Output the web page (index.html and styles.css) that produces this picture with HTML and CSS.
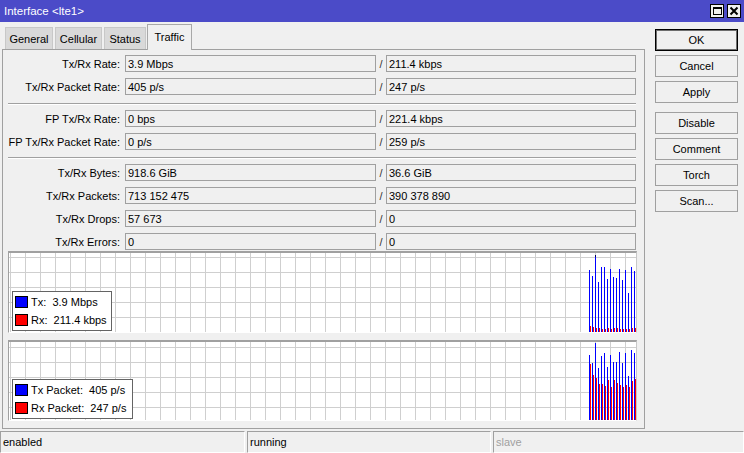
FILE: index.html
```html
<!DOCTYPE html>
<html>
<head>
<meta charset="utf-8">
<link rel="stylesheet" href="styles.css">
</head>
<body>
<div class="titlebar">
  <span class="title">Interface &lt;lte1&gt;</span>
  <div class="tb-btns">
    <span class="tb-btn"><span class="max-icon"></span></span>
    <span class="tb-btn"><svg width="10" height="10" viewBox="0 0 10 10"><path d="M1.5 1.5 L8.5 8.5 M8.5 1.5 L1.5 8.5" stroke="#000" stroke-width="2" fill="none"/></svg></span>
  </div>
</div>
<div class="body">
  <div class="left">
    <div class="tabs">
      <div class="tab t-general">General</div>
      <div class="tab t-cellular">Cellular</div>
      <div class="tab t-status">Status</div>
      <div class="tab active t-traffic">Traffic</div>
    </div>
    <div class="panel">
      <div class="row first"><div class="label">Tx/Rx Rate:</div><div class="field">3.9 Mbps</div><div class="slash">/</div><div class="field f2">211.4 kbps</div></div>
      <div class="row"><div class="label">Tx/Rx Packet Rate:</div><div class="field">405 p/s</div><div class="slash">/</div><div class="field f2">247 p/s</div></div>
      <div class="sep"></div>
      <div class="row first"><div class="label">FP Tx/Rx Rate:</div><div class="field">0 bps</div><div class="slash">/</div><div class="field f2">221.4 kbps</div></div>
      <div class="row"><div class="label">FP Tx/Rx Packet Rate:</div><div class="field">0 p/s</div><div class="slash">/</div><div class="field f2">259 p/s</div></div>
      <div class="sep sep2"></div>
      <div class="row first"><div class="label">Tx/Rx Bytes:</div><div class="field">918.6 GiB</div><div class="slash">/</div><div class="field f2">36.6 GiB</div></div>
      <div class="row"><div class="label">Tx/Rx Packets:</div><div class="field">713 152 475</div><div class="slash">/</div><div class="field f2">390 378 890</div></div>
      <div class="row"><div class="label">Tx/Rx Drops:</div><div class="field">57 673</div><div class="slash">/</div><div class="field f2">0</div></div>
      <div class="row"><div class="label">Tx/Rx Errors:</div><div class="field">0</div><div class="slash">/</div><div class="field f2">0</div></div>

      <div class="graph g1">
        <svg class="bars" width="627" height="79" viewBox="0 0 627 79">
          <g fill="#0000ff">
            <rect x="580" y="17" width="1" height="62"/>
            <rect x="583" y="23" width="1" height="56"/>
            <rect x="586" y="2" width="1" height="77"/>
            <rect x="589" y="29" width="1" height="50"/>
            <rect x="592" y="14" width="1" height="65"/>
            <rect x="595" y="14" width="1" height="65"/>
            <rect x="598" y="26" width="1" height="53"/>
            <rect x="601" y="16" width="1" height="63"/>
            <rect x="604" y="24" width="1" height="55"/>
            <rect x="607" y="25" width="1" height="54"/>
            <rect x="610" y="16" width="1" height="63"/>
            <rect x="613" y="27" width="1" height="52"/>
            <rect x="616" y="17" width="1" height="62"/>
            <rect x="619" y="40" width="1" height="39"/>
            <rect x="622" y="14" width="1" height="65"/>
            <rect x="625" y="18" width="1" height="61"/>
          </g>
          <rect x="586" y="2" width="1" height="2" fill="#000060"/>
          <g fill="#ff0000">
            <rect x="581" y="73" width="1" height="6"/>
            <rect x="584" y="74" width="1" height="5"/>
            <rect x="587" y="75" width="1" height="4"/>
            <rect x="590" y="75" width="1" height="4"/>
            <rect x="593" y="76" width="1" height="3"/>
            <rect x="596" y="76" width="1" height="3"/>
            <rect x="599" y="75" width="1" height="4"/>
            <rect x="602" y="76" width="1" height="3"/>
            <rect x="605" y="75" width="1" height="4"/>
            <rect x="608" y="75" width="1" height="4"/>
            <rect x="611" y="76" width="1" height="3"/>
            <rect x="614" y="76" width="1" height="3"/>
            <rect x="617" y="76" width="1" height="3"/>
            <rect x="620" y="76" width="1" height="3"/>
            <rect x="623" y="75" width="1" height="4"/>
            <rect x="626" y="75" width="1" height="4"/>
          </g>
        </svg>
        <div class="legend l1">
          <div class="lrow"><span class="swatch blue"></span><span class="ltext">Tx:  3.9 Mbps</span></div>
          <div class="lrow"><span class="swatch red"></span><span class="ltext">Rx:  211.4 kbps</span></div>
        </div>
      </div>

      <div class="graph g2">
        <svg class="bars" width="627" height="78" viewBox="0 0 627 78">
          <g fill="#0000ff">
            <rect x="580" y="13" width="1" height="65"/>
            <rect x="583" y="21" width="1" height="57"/>
            <rect x="586" y="1" width="1" height="77"/>
            <rect x="589" y="26" width="1" height="52"/>
            <rect x="592" y="14" width="1" height="64"/>
            <rect x="595" y="11" width="1" height="67"/>
            <rect x="598" y="25" width="1" height="53"/>
            <rect x="601" y="13" width="1" height="65"/>
            <rect x="604" y="20" width="1" height="58"/>
            <rect x="607" y="20" width="1" height="58"/>
            <rect x="610" y="10" width="1" height="68"/>
            <rect x="613" y="21" width="1" height="57"/>
            <rect x="616" y="11" width="1" height="67"/>
            <rect x="619" y="34" width="1" height="44"/>
            <rect x="622" y="8" width="1" height="70"/>
            <rect x="625" y="11" width="1" height="67"/>
          </g>
          <g fill="#ff0000">
            <rect x="581" y="22" width="1" height="56"/>
            <rect x="584" y="33" width="1" height="45"/>
            <rect x="587" y="36" width="1" height="42"/>
            <rect x="590" y="42" width="1" height="36"/>
            <rect x="593" y="42" width="1" height="36"/>
            <rect x="596" y="44" width="1" height="34"/>
            <rect x="599" y="38" width="1" height="40"/>
            <rect x="602" y="45" width="1" height="33"/>
            <rect x="605" y="38" width="1" height="40"/>
            <rect x="608" y="41" width="1" height="37"/>
            <rect x="611" y="43" width="1" height="35"/>
            <rect x="614" y="45" width="1" height="33"/>
            <rect x="617" y="43" width="1" height="35"/>
            <rect x="620" y="45" width="1" height="33"/>
            <rect x="623" y="39" width="1" height="39"/>
            <rect x="626" y="37" width="1" height="41"/>
          </g>
        </svg>
        <div class="legend l2">
          <div class="lrow"><span class="swatch blue"></span><span class="ltext">Tx Packet:  405 p/s</span></div>
          <div class="lrow"><span class="swatch red"></span><span class="ltext">Rx Packet:  247 p/s</span></div>
        </div>
      </div>
    </div>
  </div>
  <div class="buttons">
    <div class="btn ok">OK</div>
    <div class="btn">Cancel</div>
    <div class="btn">Apply</div>
    <div class="btn group">Disable</div>
    <div class="btn">Comment</div>
    <div class="btn">Torch</div>
    <div class="btn">Scan...</div>
  </div>
</div>
<div class="statusbar">
  <div class="cell c1">enabled</div>
  <div class="cell c2">running</div>
  <div class="cell c3 dim">slave</div>
</div>
</body>
</html>
```
FILE: styles.css
```css
html, body {
  margin: 0;
  padding: 0;
}
body {
  width: 744px;
  height: 453px;
  overflow: hidden;
  background: #f0f0f0;
  font-family: "Liberation Sans", Arial, sans-serif;
  font-size: 11px;
  color: #000;
}

/* title bar */
.titlebar {
  height: 22px;
  background: #4b4bc8;
  display: flex;
  align-items: center;
  justify-content: space-between;
  padding: 0 3px 0 4px;
  color: #fff;
}
.title {
  font-size: 11.5px;
  line-height: 22px;
}
.tb-btns {
  display: flex;
  gap: 3px;
}
.tb-btn {
  width: 14px;
  height: 14px;
  box-sizing: border-box;
  border: 1px solid #000;
  background: #f0f0f0;
  display: flex;
  align-items: center;
  justify-content: center;
}
.max-icon {
  width: 9px;
  height: 8px;
  box-sizing: border-box;
  border: 1px solid #000;
  border-top-width: 2px;
}

/* main body */
.body {
  display: flex;
  height: 407px;
}
.left {
  margin-left: 2px;
  width: 643px;
}

/* tabs */
.tabs {
  display: flex;
  align-items: flex-end;
  height: 27px;
  padding-left: 3px;
}
.tab {
  height: 22px;
  box-sizing: border-box;
  border: 1px solid #c8c8c8;
  border-bottom: none;
  background: #d9d9d9;
  text-align: center;
  line-height: 22px;
  margin-right: 2px;
}
.t-general { width: 48px; }
.t-cellular { width: 47px; }
.t-status { width: 42px; margin-right: 1px; }
.t-traffic { width: 45px; }
.tab.active {
  height: 26px;
  margin-bottom: -1px;
  background: #f0f0f0;
  border-color: #a8a8a8;
  line-height: 24px;
  position: relative;
  z-index: 1;
}

/* panel */
.panel {
  height: 380px;
  box-sizing: border-box;
  border: 1px solid #a0a0a0;
  padding-top: 5px;
}
.row {
  display: flex;
  height: 17px;
  margin-top: 6px;
}
.row.first {
  margin-top: 0;
}
.label {
  width: 117px;
  margin-right: 5px;
  text-align: right;
  line-height: 19px;
  white-space: nowrap;
}
.field {
  width: 251px;
  height: 17px;
  box-sizing: border-box;
  border: 1px solid #a0a0a0;
  padding-left: 2px;
  padding-top: 1px;
  line-height: 15px;
  white-space: nowrap;
}
.field.f2 {
  width: 250px;
}
.slash {
  width: 10px;
  text-align: center;
  line-height: 19px;
  color: #333;
}
.sep {
  margin: 8px 0 5px 5px;
  width: 628px;
  border-top: 1px solid #a0a0a0;
  border-bottom: 1px solid #fff;
}
.sep.sep2 {
  margin-top: 7px;
}

/* graphs */
.graph {
  position: relative;
  margin-left: 5px;
  width: 629px;
  box-sizing: border-box;
  border: 1px solid #a0a0a0;
  border-top: 2px solid #a0a0a0;
  border-right: 1px solid #c8c8c8;
  border-bottom: 1px solid #fff;
  background-color: #fff;
  background-image:
    linear-gradient(to right, #cfcfcf 1px, transparent 1px),
    linear-gradient(to bottom, #cfcfcf 1px, transparent 1px);
  background-size: 15px 15px;
}
.g1 {
  margin-top: 1px;
  height: 82px;
  background-position: 1px 4px;
}
.g2 {
  margin-top: 7px;
  height: 81px;
  background-position: 1px 5px;
}
.bars {
  position: absolute;
  left: 0;
  top: 0;
  display: block;
}
.legend {
  position: absolute;
  left: 3px;
  box-sizing: border-box;
  border: 1px solid #646464;
  background: #fff;
  padding: 1px 2px 1px 2px;
}
.l1 {
  top: 38px;
  width: 100px;
}
.l2 {
  top: 37px;
  width: 121px;
}
.lrow {
  display: flex;
  align-items: center;
  height: 18px;
}
.swatch {
  width: 13px;
  height: 12px;
  box-sizing: border-box;
  border: 1px solid #000;
  margin-right: 3px;
}
.swatch.blue { background: #0000ff; }
.swatch.red { background: #ff0000; }
.ltext {
  white-space: pre;
}

/* buttons */
.buttons {
  margin-left: 10px;
  width: 83px;
  padding-top: 7px;
  display: flex;
  flex-direction: column;
}
.btn {
  height: 22px;
  box-sizing: border-box;
  border: 1px solid #a0a0a0;
  background: #f0f0f0;
  text-align: center;
  line-height: 21px;
  margin-top: 4px;
}
.btn.ok {
  margin-top: 0;
  border: 1px solid #000;
  box-shadow: inset 0 0 0 1px #6e6e6e;
}
.btn.group {
  margin-top: 9px;
}

/* status bar */
.statusbar {
  display: flex;
  margin-top: 2px;
  height: 22px;
}
.cell {
  box-sizing: border-box;
  height: 22px;
  border-top: 1px solid #a0a0a0;
  border-left: 1px solid #a0a0a0;
  border-bottom: 1px solid #fff;
  border-right: 1px solid #fff;
  padding-left: 2px;
  line-height: 20px;
  white-space: nowrap;
}
.c1 { width: 245px; margin-right: 2px; }
.c2 { width: 244px; margin-right: 2px; }
.c3 { flex: 1; }
.dim { color: #a0a0a0; }
```
